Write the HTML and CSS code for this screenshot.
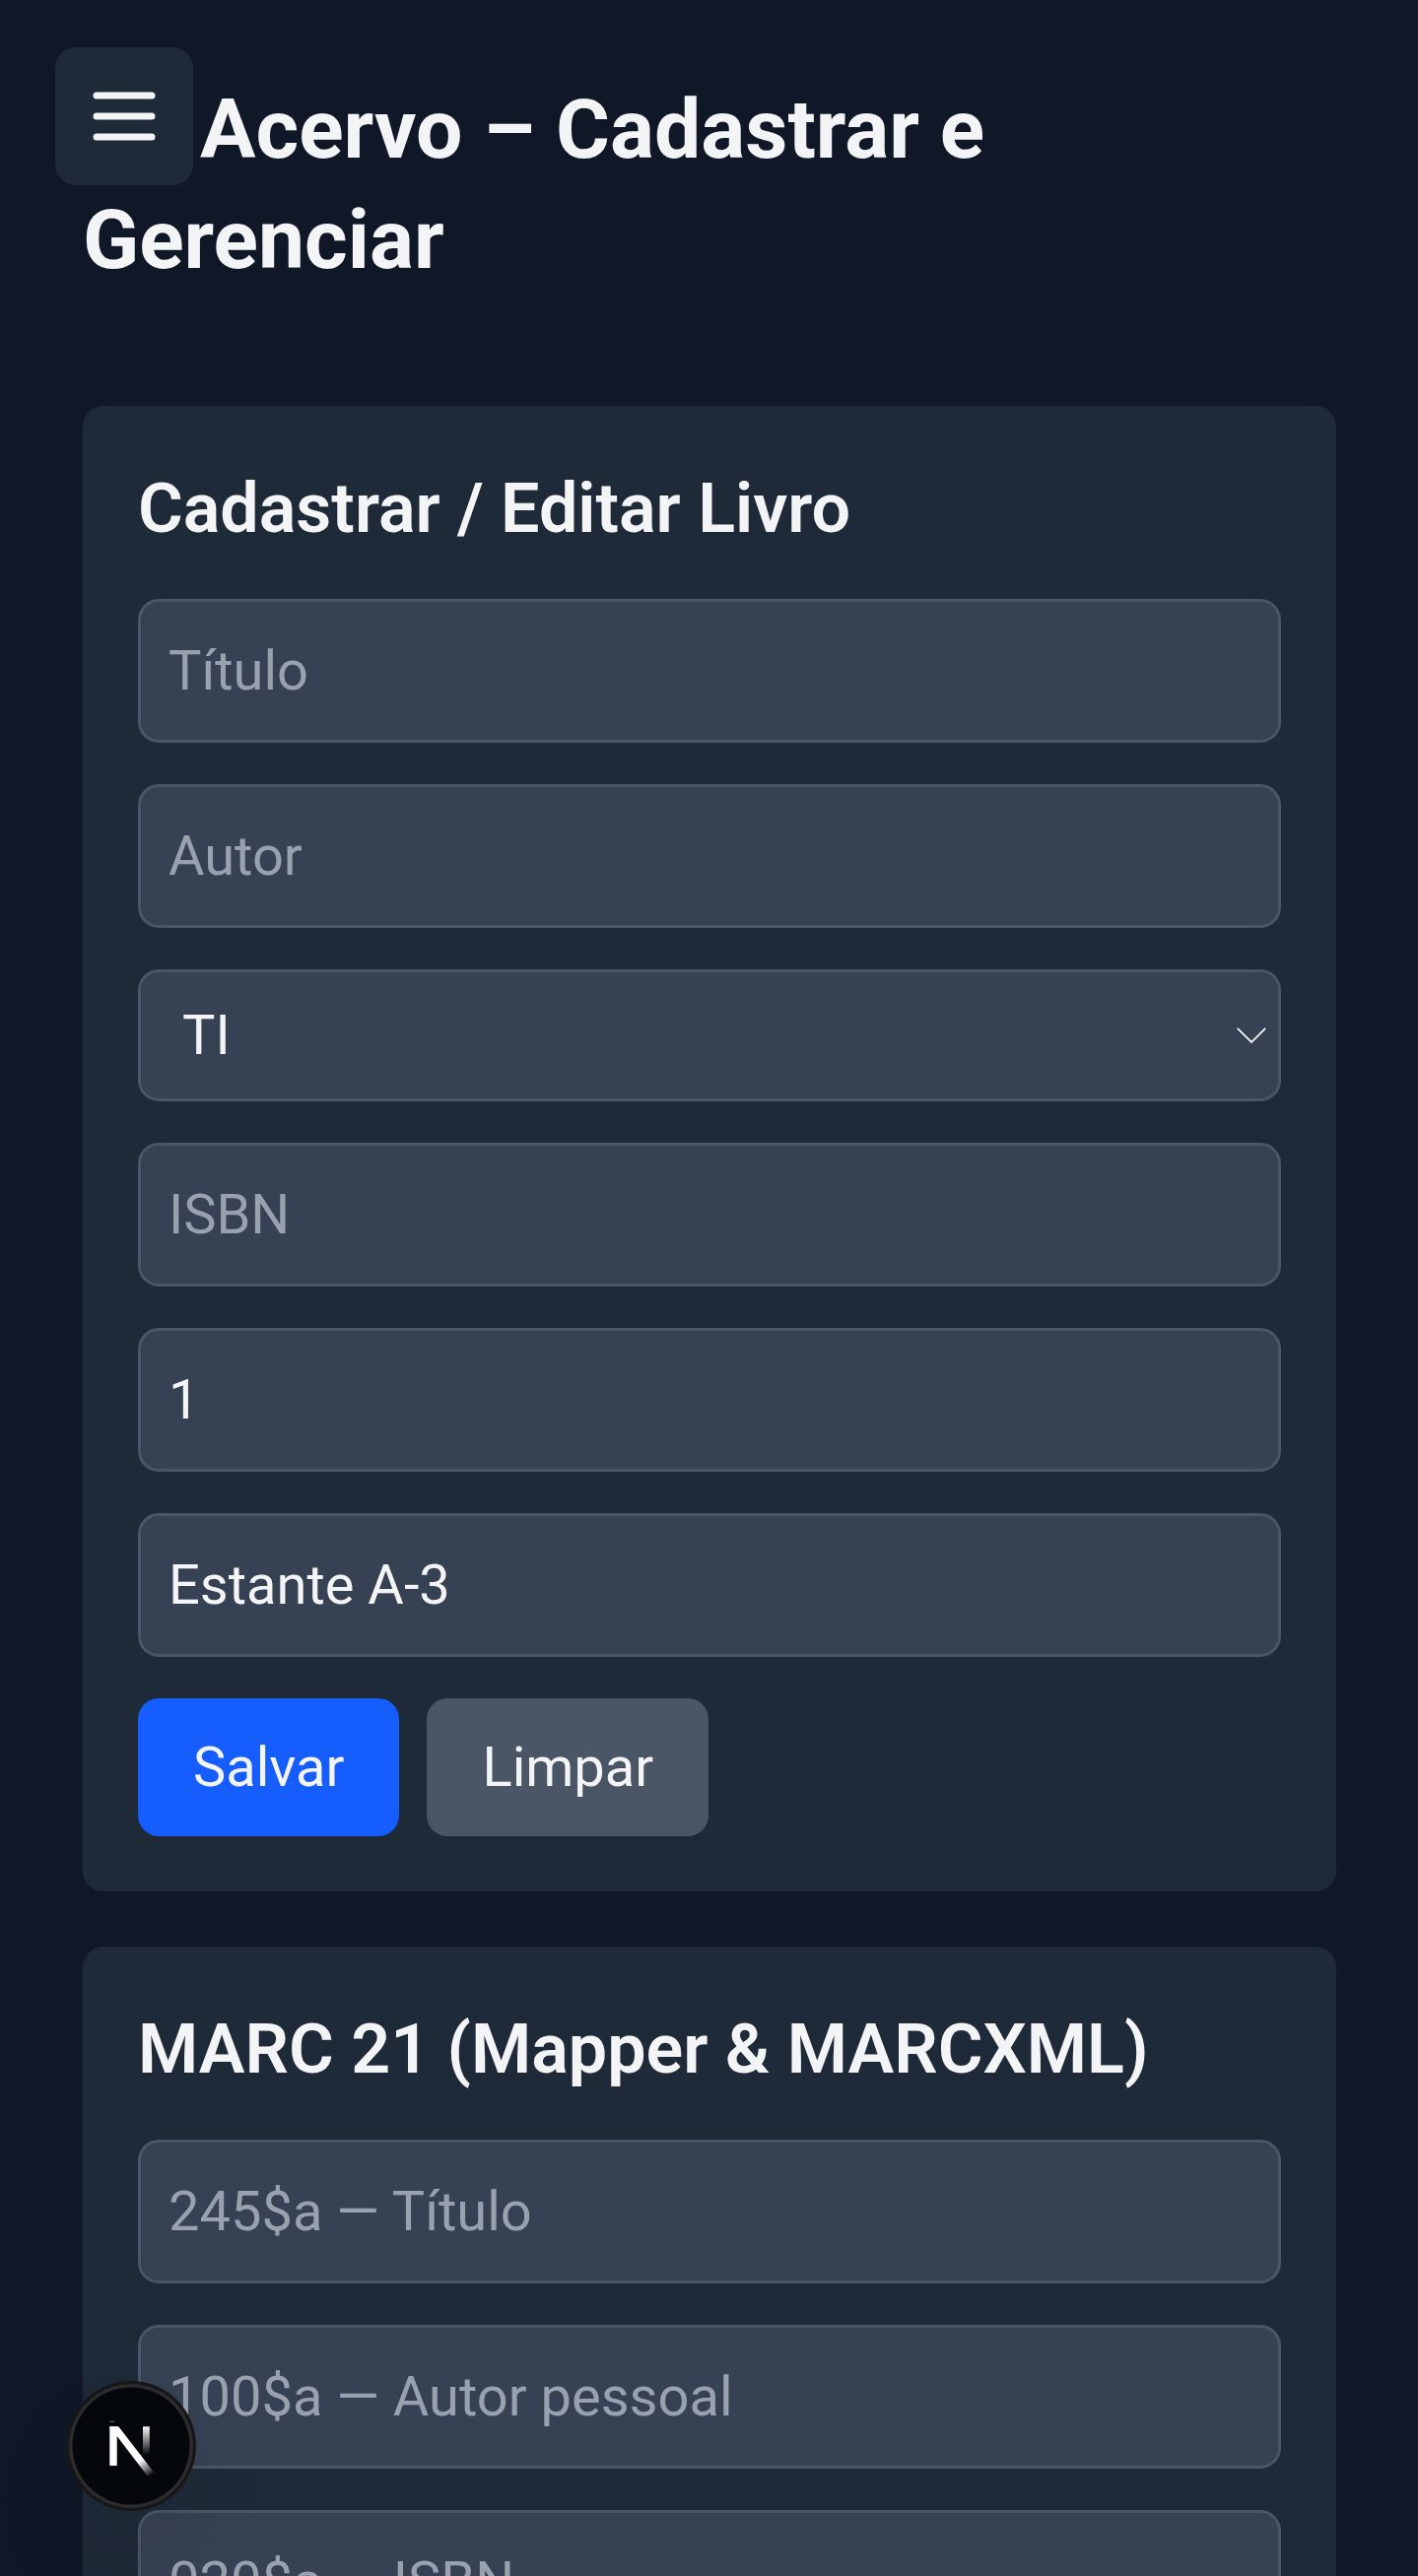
FILE: index.html
```html
<!DOCTYPE html>
<html lang="pt-BR">
<head>
  <meta charset="utf-8">
  <title>Acervo – Cadastrar e Gerenciar</title>
  <link rel="stylesheet" href="styles.css">
</head>
<body>
  <button class="menu-toggle" type="button" aria-label="Menu">
    <svg class="menu-icon" viewBox="0 0 24 24" fill="none" stroke="currentColor" stroke-width="2" stroke-linecap="round"><path d="M4 6h16M4 12h16M4 18h16"/></svg>
  </button>

  <main class="page">
    <h1 class="page-title">Acervo – Cadastrar e Gerenciar</h1>

    <section class="card">
      <h2 class="card-title">Cadastrar / Editar Livro</h2>
      <form class="form">
        <input class="field" type="text" placeholder="Título">
        <input class="field" type="text" placeholder="Autor">
        <div class="select">
          <span>TI</span>
          <svg class="chevron" viewBox="0 0 30 17" fill="none" stroke="currentColor" stroke-width="1.8"><path d="M.8 .8 15 15 29.2 .8"/></svg>
        </div>
        <input class="field" type="text" placeholder="ISBN">
        <input class="field" type="text" value="1">
        <input class="field" type="text" value="Estante A-3">
        <div class="actions">
          <button class="btn btn-primary" type="button">Salvar</button>
          <button class="btn btn-muted" type="button">Limpar</button>
        </div>
      </form>
    </section>

    <section class="card">
      <h2 class="card-title">MARC 21 (Mapper &amp; MARCXML)</h2>
      <form class="form">
        <input class="field" type="text" placeholder="245$a — Título">
        <input class="field" type="text" placeholder="100$a — Autor pessoal">
        <input class="field" type="text" placeholder="020$a — ISBN">
      </form>
    </section>
  </main>

  <div class="dev-badge">
    <svg class="dev-logo" viewBox="0 0 126 126" fill="none">
      <defs>
        <linearGradient id="diagonal" gradientUnits="userSpaceOnUse" x1="73" y1="77" x2="84" y2="93"><stop stop-color="#fff"/><stop offset="1" stop-color="#fff" stop-opacity="0"/></linearGradient>
        <linearGradient id="stem" gradientUnits="userSpaceOnUse" x1="78" y1="43" x2="78" y2="72"><stop stop-color="#fff"/><stop offset="1" stop-color="#fff" stop-opacity="0"/></linearGradient>
      </defs>
      <path d="M41.5 38.3h5" stroke="#777" stroke-width="1"/>
      <path d="M41.3 43.3H48.7V83H41.3Z" fill="#fff"/>
      <path d="M41.3 43.3H50.3L86.2 89.8 80 94 48.7 53 42 46Z" fill="url(#diagonal)"/>
      <path d="M75 43.3H81.8V72H75Z" fill="url(#stem)"/>
    </svg>
  </div>
</body>
</html>
```

FILE: styles.css
```css
* {
  box-sizing: border-box;
}

body {
  margin: 0;
  background: #101726;
  color: #f3f4f6;
  font: 56px/84px Roboto, sans-serif;
}

.page {
  display: flex;
  flex-direction: column;
  gap: 56px;
  height: 2615px;
  padding: 76px 83px 0 84px;
  overflow: hidden;
}

.page-title {
  flex: none;
  margin: 0 0 56px;
  height: 224px;
  font-size: 84px;
  line-height: 112px;
  font-weight: 700;
  text-indent: 119px;
}

.card {
  flex: none;
  padding: 56px;
  border-radius: 21px;
  background: #1f2a38;
}

.card-title {
  margin: 0 0 44px;
  font-size: 70px;
  line-height: 96px;
  font-weight: 600;
}

.form {
  display: flex;
  flex-direction: column;
  gap: 42px;
}

.field,
.select {
  width: 100%;
  height: 146px;
  padding: 28px;
  border: 3px solid #4a5565;
  border-radius: 21px;
  background: #364153;
  color: #f3f4f6;
  font: inherit;
}

.field::placeholder {
  color: #99a1af;
  opacity: 1;
}

.select {
  display: flex;
  align-items: center;
  justify-content: space-between;
  height: 134px;
  padding: 0 12px 0 42px;
}

.chevron {
  width: 30px;
  height: 17px;
}

.actions {
  display: flex;
  gap: 28px;
}

.btn {
  height: 140px;
  padding: 0 56px;
  border: 0;
  border-radius: 21px;
  color: #f3f4f6;
  font: inherit;
}

.btn-primary {
  background: #155dfc;
}

.btn-muted {
  background: #4a5565;
}

.menu-toggle {
  position: fixed;
  top: 48px;
  left: 56px;
  width: 140px;
  height: 140px;
  padding: 28px;
  border: 0;
  border-radius: 21px;
  background: #1f2a38;
  color: #f3f4f6;
}

.menu-icon {
  display: block;
  width: 84px;
  height: 84px;
}

.dev-badge {
  position: fixed;
  left: 70px;
  top: 2420px;
  width: 126px;
  height: 126px;
  border-radius: 50%;
  background: #04080b;
  box-shadow: 0 0 0 3px #171717, inset 0 0 0 3.5px #2c2c2e, 0 56px 112px -28px rgba(0, 0, 0, 0.24);
}

.dev-logo {
  display: block;
  width: 126px;
  height: 126px;
}
```
